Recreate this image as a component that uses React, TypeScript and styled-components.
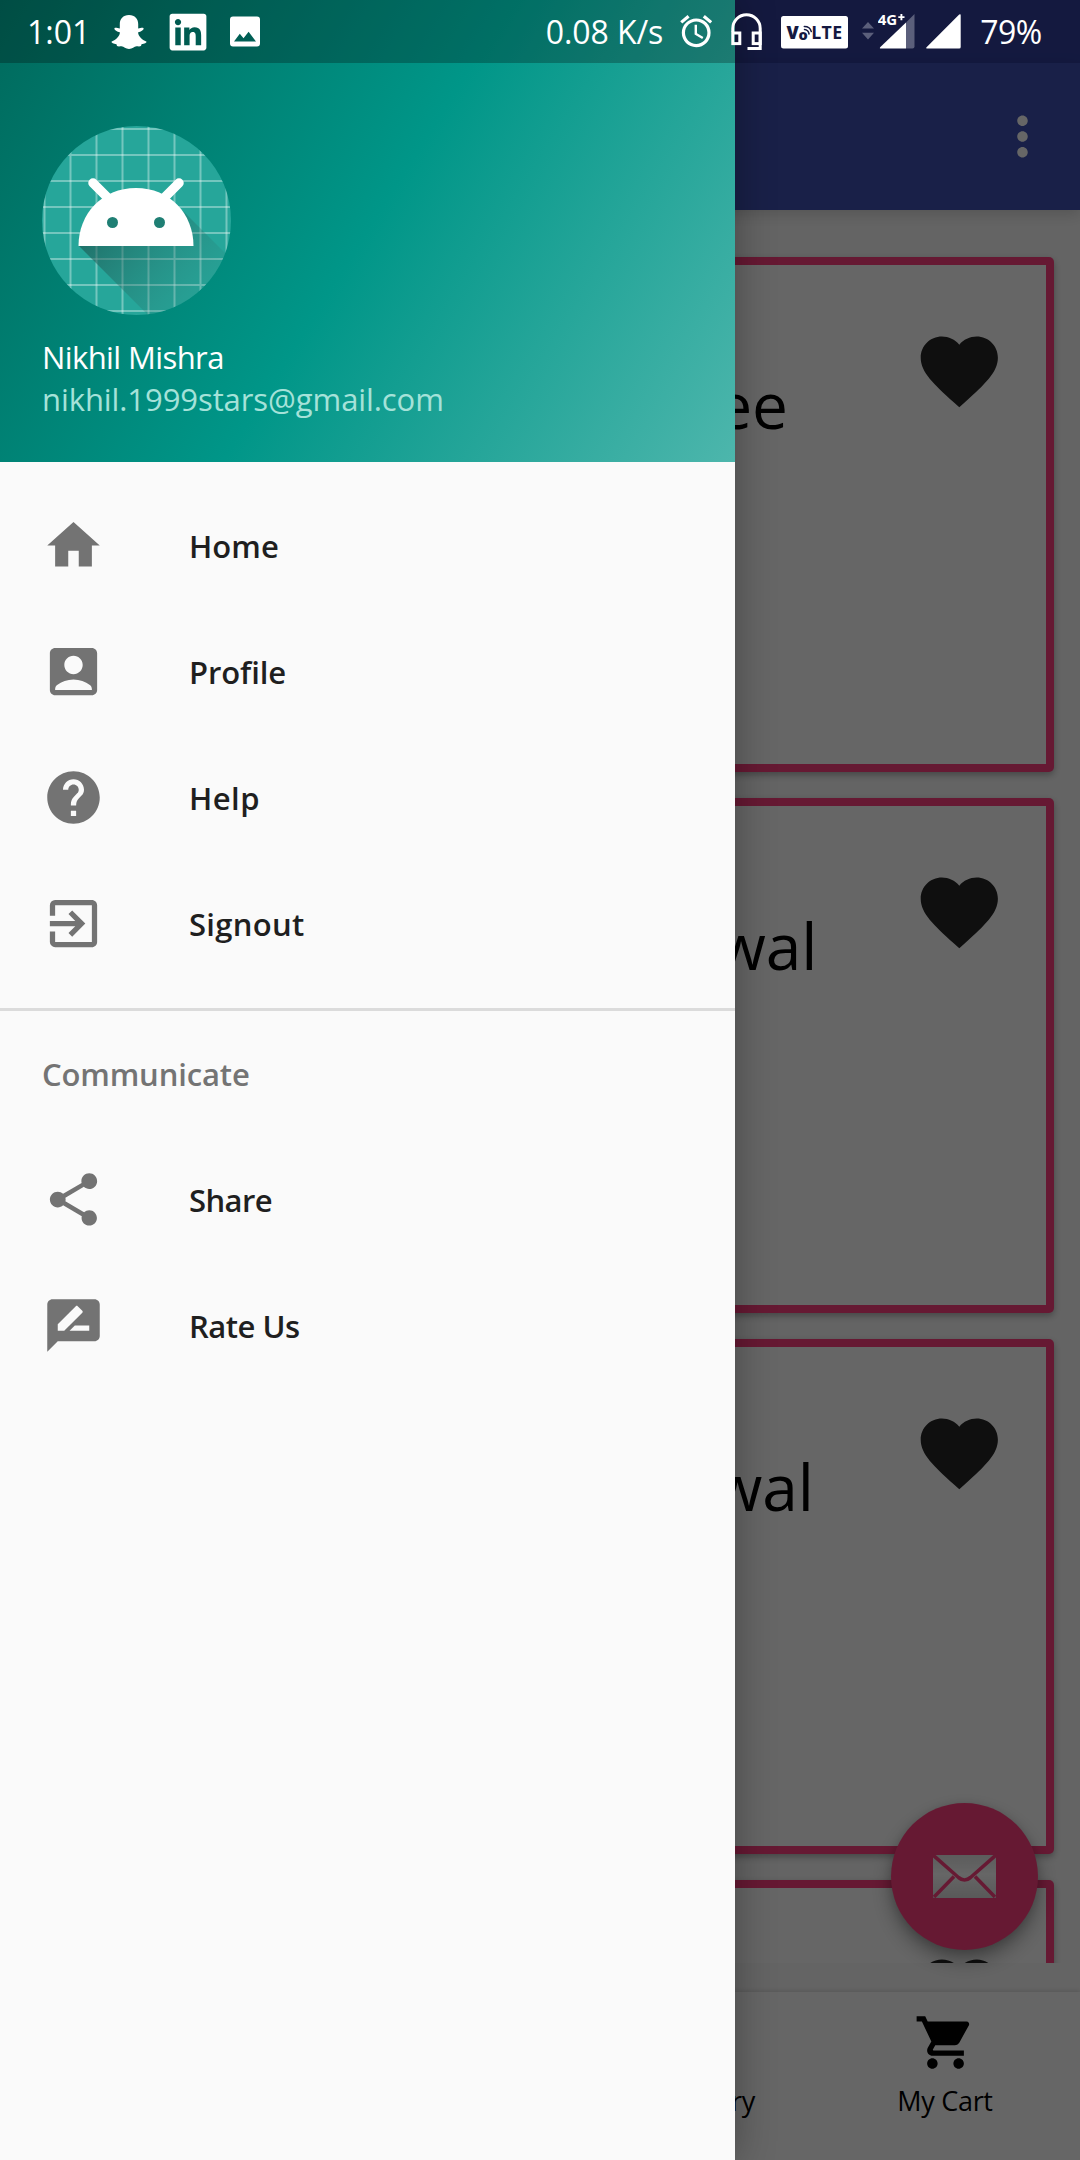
import React from "react";
import styled, { createGlobalStyle } from "styled-components";
import {
  MdAccountBox,
  MdAlarm,
  MdExitToApp,
  MdFavorite,
  MdHelp,
  MdMoreVert,
  MdShare,
  MdShoppingCart,
} from "react-icons/md";
import { FaLinkedin } from "react-icons/fa";

const GlobalStyle = createGlobalStyle`
  * { box-sizing: border-box; }
  body {
    margin: 0;
    background: #646464;
    font-family: "Open Sans", "Noto Sans", sans-serif;
  }
  svg { display: block; flex: none; }
`;

/* Full-screen layers share one grid cell */
const Screen = styled.div`
  display: grid;
  grid-template: 2160px / 1080px;
  width: 1080px;
  height: 2160px;
  overflow: hidden;
`;

const Page = styled.div`
  grid-area: 1 / 1;
  position: relative;
  display: flex;
  flex-direction: column;
  min-height: 0;
  background: #fafafa;
`;

const StatusBackdrop = styled.div`
  flex: none;
  height: 63px;
  background: #32409f;
`;

const AppBar = styled.header`
  flex: none;
  display: flex;
  align-items: center;
  justify-content: flex-end;
  height: 147px;
  padding-right: 26px;
  background: #3f51b5;
  color: #fff;
  box-shadow: 0 4px 14px rgba(0, 0, 0, 0.16);
  z-index: 1;
`;

const CardList = styled.main`
  flex: none;
  display: flex;
  flex-direction: column;
  gap: 26px;
  height: 1753px;
  padding: 47px 26px 0;
  overflow: hidden;
`;

const Card = styled.article`
  flex: none;
  display: flex;
  height: 515px;
  padding: 8px;
  border-radius: 5px;
  background: #ff4081;
  box-shadow: 0 3px 7px rgba(0, 0, 0, 0.3);
`;

const CardBody = styled.div`
  flex: 1;
  display: flex;
  align-items: flex-start;
  justify-content: space-between;
  padding: 59.5px 40px 0 0;
  background: #fff;
  color: #262626;
`;

const CardTitle = styled.h2<{ $width: number }>`
  width: ${(p) => p.$width}px;
  margin: 36.5px 0 0;
  font-size: 64px;
  font-weight: 400;
  line-height: 88px;
  text-align: right;
  color: #000;
`;

const BottomNav = styled.nav`
  flex: none;
  display: grid;
  grid-template-columns: repeat(4, 270px);
  height: 168px;
  margin-top: 29px;
  background: #fff;
  color: #000;
  box-shadow: 0 -1px 5px rgba(0, 0, 0, 0.14);
`;

const NavTab = styled.div<{ $column: number }>`
  grid-column: ${(p) => p.$column};
  display: flex;
  flex-direction: column;
  align-items: center;
  gap: 8px;
  padding-top: 19px;
`;

const NavIconSpace = styled.div`
  height: 63px;
`;

const NavLabel = styled.span<{ $indent?: number }>`
  padding-left: ${(p) => p.$indent ?? 0}px;
  font-size: 27px;
  line-height: 38px;
  letter-spacing: -0.3px;
  white-space: nowrap;
`;

const Fab = styled.button`
  position: absolute;
  right: 42px;
  bottom: 210px;
  display: flex;
  align-items: center;
  justify-content: center;
  width: 147px;
  height: 147px;
  padding: 0;
  border: 0;
  border-radius: 50%;
  background: #ff4081;
  box-shadow: 0 10px 20px rgba(0, 0, 0, 0.34), 0 2px 10px rgba(0, 0, 0, 0.12);
`;

const Scrim = styled.div`
  grid-area: 1 / 1;
  z-index: 2;
  background: rgba(0, 0, 0, 0.6);
`;

const Drawer = styled.aside`
  grid-area: 1 / 1;
  z-index: 3;
  display: flex;
  flex-direction: column;
  width: 735px;
  background: #fafafa;
  box-shadow: 0 0 38px rgba(0, 0, 0, 0.32);
`;

const DrawerHeader = styled.div`
  flex: none;
  display: flex;
  flex-direction: column;
  height: 462px;
  background: linear-gradient(122.15deg, #00695c, #009688 50%, #4db6ac);
`;

const StatusShade = styled.div`
  flex: none;
  height: 63px;
  background: rgba(0, 0, 0, 0.26);
`;

const Account = styled.div`
  display: flex;
  flex-direction: column;
  padding: 63px 42px 0;
  color: #fff;
`;

const AccountName = styled.span`
  margin-top: 21px;
  font-size: 31px;
  line-height: 42px;
  letter-spacing: -0.6px;
`;

const AccountEmail = styled.span`
  font-size: 31px;
  line-height: 42px;
  letter-spacing: -0.08px;
  color: #a5e2d9;
`;

const Menu = styled.ul`
  display: flex;
  flex-direction: column;
  margin: 0;
  padding: 21px 0;
  list-style: none;
`;

const MenuSection = styled(Menu)`
  padding: 0;
  border-top: 3px solid #dbdbdb;
`;

const MenuItem = styled.li`
  display: flex;
  align-items: center;
  gap: 84px;
  height: 126px;
  padding-left: 42px;
  color: #737373;

  svg { margin-bottom: 2px; }
`;

const MenuLabel = styled.span<{ $spacing: number }>`
  font-size: 31px;
  font-weight: 600;
  line-height: 42px;
  letter-spacing: ${(p) => p.$spacing}px;
  color: #1f1f1f;
`;

const MenuHeading = styled.li`
  display: flex;
  align-items: center;
  height: 126px;
  padding-left: 42px;
  font-size: 31px;
  font-weight: 600;
  letter-spacing: -0.15px;
  color: #747474;
`;

const StatusBar = styled.div`
  grid-area: 1 / 1;
  z-index: 4;
  display: flex;
  align-items: center;
  height: 63px;
  color: #fff;
`;

const StatusSlot = styled.div<{ $gap: number; $width: number }>`
  flex: none;
  display: flex;
  align-items: center;
  justify-content: center;
  width: ${(p) => p.$width}px;
  margin-left: ${(p) => p.$gap}px;
`;

const StatusText = styled.span<{ $gap: number; $width: number; $spacing?: number }>`
  flex: none;
  width: ${(p) => p.$width}px;
  margin-left: ${(p) => p.$gap}px;
  font-size: 32px;
  line-height: 62px;
  letter-spacing: ${(p) => p.$spacing ?? 0}px;
  white-space: nowrap;
`;

function SnapchatIcon() {
  return (
    <svg width="36" height="63" viewBox="0 0 36 63" fill="currentColor">
      <path
        transform="translate(0 15)"
        d="M18 0C12 0 8.800 4.200 8.800 9v4.400c-2-.1-4.200-1-5.200-.3-1 1.400 2.200 3.400 5.200 4.200C9.300 20.600 5 25 .8 26.500c-1.200.8.8 2 4.700 2.800.3 2.200 1 2.400 5 2C13 31.600 14.500 34 18 34s5-2.400 7.500-2.700c4 .4 4.700.2 5-2 3.900-.8 5.900-2 4.700-2.800-4.200-1.500-8.500-5.900-8-9.200 3-.8 6.200-2.800 5.200-4.200-1-.7-3.200.2-5.200.3V9C27.200 4.200 24 0 18 0z"
      />
    </svg>
  );
}

function PictureIcon() {
  return (
    <svg width="30" height="63" viewBox="0 0 30 63" fill="currentColor">
      <path
        fillRule="evenodd"
        transform="translate(0 16.600)"
        d="M3 0h24a3 3 0 0 1 3 3v24a3 3 0 0 1-3 3H3a3 3 0 0 1-3-3V3a3 3 0 0 1 3-3zM4 25h22L18.600 15.200l-5.100 6.400-3.700-4.400z"
      />
    </svg>
  );
}

function HeadsetIcon() {
  return (
    <svg width="31" height="63" viewBox="0 0 31 63" fill="none" stroke="currentColor" strokeWidth="3">
      <path d="M1.800 32V28.500a13.700 13.700 0 0 1 27.400 0V48.600H16.500" />
      <rect x="1.800" y="33" width="7" height="10.600" />
      <rect x="22.200" y="33" width="7" height="10.600" />
    </svg>
  );
}

function VolteIcon() {
  return (
    <svg width="67" height="63" viewBox="0 0 67 63">
      <rect y="16" width="67" height="32.600" rx="2.500" fill="#fff" />
      <g fill="#141940" fontFamily="Open Sans, sans-serif" fontWeight="800">
        <text x="5.500" y="39.400" fontSize="17.700">V</text>
        <text x="17.600" y="39.800" fontSize="14.500">o</text>
        <text x="30.200" y="39.400" fontSize="17.700" fontWeight="700" textLength="31">LTE</text>
      </g>
      <g fill="none" stroke="#141940" strokeWidth="1.500" strokeLinecap="round">
        <path d="M23.500 29.500q3.800.2 4.600 4.500" />
        <path d="M23.300 26.600q5.800 0 7 5" />
      </g>
    </svg>
  );
}

function DataArrowsIcon() {
  return (
    <svg width="12" height="63" viewBox="0 0 12 63" fill="#5b5f7b">
      <path d="M6 22l6 6.600H0zM6 39.400l6-6.600H0z" />
    </svg>
  );
}

function MobileSignalIcon() {
  return (
    <svg width="37" height="63" viewBox="0 0 37 63">
      <path d="M28 22.500L36.500 14v32.600a2 2 0 0 1-2 2H28z" fill="#5b5f7b" />
      <path d="M28 22.500v26.100H3q-2 0-.6-1.500z" fill="#fff" />
      <text x="-.3" y="25" fontSize="15" fontWeight="700" fontFamily="Open Sans, sans-serif" fill="#fff">
        4G
      </text>
      <path d="M23.400 14v6.200M20.300 17.100h6.200" stroke="#fff" strokeWidth="1.900" />
    </svg>
  );
}

function SignalIcon() {
  return (
    <svg width="35" height="63" viewBox="0 0 35 63" fill="currentColor">
      <path d="M34.700 15.200v31.900q0 1.500-1.500 1.500H1.500Q-.7 48.600.8 47L33.200 14.600q1.500-1 1.500.6z" />
    </svg>
  );
}

function AvatarImage() {
  const lines = [3, 29, 55, 81, 107, 133, 159, 185];
  return (
    <svg width="189" height="189" viewBox="0 0 189 189">
      <defs>
        <clipPath id="disc">
          <circle cx="94.500" cy="94.500" r="94.500" />
        </clipPath>
        <linearGradient id="cast" gradientUnits="userSpaceOnUse" x1="60" y1="90" x2="160" y2="180">
          <stop offset="0" stopColor="#1b4f4a" stopOpacity=".62" />
          <stop offset="1" stopColor="#2f7f77" stopOpacity=".1" />
        </linearGradient>
      </defs>
      <g clipPath="url(#disc)">
        <rect width="189" height="189" fill="#26a69a" />
        <g stroke="#fff" strokeOpacity=".36" strokeWidth="2">
          {lines.map((n) => (
            <path key={n} d={`M${n - 0.5} 0v189M0 ${n}h189`} />
          ))}
        </g>
        <path d="M37 120L142 86 260 204 160 243z" fill="url(#cast)" />
      </g>
      <path d="M36.500 120C36.500 88 60 62 94 62s57.500 26 57.500 58z" fill="#fff" />
      <path d="M51 57l15 15M137 57l-15 15" stroke="#fff" strokeWidth="9.500" strokeLinecap="round" />
      <circle cx="70.500" cy="96.500" r="5.500" fill="#1f7f74" />
      <circle cx="117.500" cy="96.500" r="5.500" fill="#1f7f74" />
    </svg>
  );
}

function HomeIcon() {
  return (
    <svg width="63" height="63" viewBox="0 0 24 24" fill="currentColor">
      <path d="M10 20v-6h4v6h5v-8h3L12 3 2 12h3v8z" />
    </svg>
  );
}

function ReviewIcon() {
  return (
    <svg width="63" height="63" viewBox="0 0 24 24" fill="currentColor">
      <path d="M20 2H4c-1.100 0-1.990.9-1.990 2L2 22l4-4h14c1.100 0 2-.9 2-2V4c0-1.100-.9-2-2-2zM6 14v-2.470l6.880-6.880c.2-.2.510-.2.710 0l1.770 1.770c.2.200.2.510 0 .71L8.470 14H6zm12 0h-7.500l2-2H18v2z" />
    </svg>
  );
}

function EnvelopeIcon() {
  return (
    <svg width="63" height="43" viewBox="0 0 63 43">
      <defs>
        <linearGradient id="paper" x1="0" y1="0" x2="0" y2="1">
          <stop offset="0" stopColor="#e6e6e6" />
          <stop offset=".45" stopColor="#ffffff" />
          <stop offset="1" stopColor="#dedede" />
        </linearGradient>
      </defs>
      <rect width="63" height="43" rx="1" fill="url(#paper)" />
      <g fill="none" stroke="#ff4081" strokeWidth="3.600">
        <path d="M0 0l25.500 22.500q6 5 12 0L63 0" />
        <path d="M1 42l20-20.500M62 42L42 21.500" />
      </g>
    </svg>
  );
}

const cards = [
  { title: "ee", width: 754 },
  { title: "wal", width: 783.5 },
  { title: "wal", width: 780 },
  { title: "", width: 0 },
];

const mainMenu = [
  { label: "Home", spacing: 0.05, icon: <HomeIcon /> },
  { label: "Profile", spacing: -0.1, icon: <MdAccountBox size={63} /> },
  { label: "Help", spacing: 0.45, icon: <MdHelp size={63} /> },
  { label: "Signout", spacing: 0.3, icon: <MdExitToApp size={63} /> },
];

const communicateMenu = [
  { label: "Share", spacing: -0.6, icon: <MdShare size={63} /> },
  { label: "Rate Us", spacing: -0.5, icon: <ReviewIcon /> },
];

export default function App() {
  return (
    <>
      <GlobalStyle />
      <Screen>
        <Page>
          <StatusBackdrop />
          <AppBar>
            <MdMoreVert size={63} />
          </AppBar>
          <CardList>
            {cards.map((card, i) => (
              <Card key={i}>
                <CardBody>
                  <CardTitle $width={card.width}>{card.title}</CardTitle>
                  <MdFavorite size={92.6} />
                </CardBody>
              </Card>
            ))}
          </CardList>
          <BottomNav>
            <NavTab $column={3}>
              <NavIconSpace />
              <NavLabel $indent={136}>ry</NavLabel>
            </NavTab>
            <NavTab $column={4}>
              <MdShoppingCart size={63} />
              <NavLabel>My Cart</NavLabel>
            </NavTab>
          </BottomNav>
          <Fab aria-label="Email">
            <EnvelopeIcon />
          </Fab>
        </Page>

        <Scrim />

        <Drawer>
          <DrawerHeader>
            <StatusShade />
            <Account>
              <AvatarImage />
              <AccountName>Nikhil Mishra</AccountName>
              <AccountEmail>nikhil.1999stars@gmail.com</AccountEmail>
            </Account>
          </DrawerHeader>
          <Menu>
            {mainMenu.map((item) => (
              <MenuItem key={item.label}>
                {item.icon}
                <MenuLabel $spacing={item.spacing}>{item.label}</MenuLabel>
              </MenuItem>
            ))}
          </Menu>
          <MenuSection>
            <MenuHeading>Communicate</MenuHeading>
            {communicateMenu.map((item) => (
              <MenuItem key={item.label}>
                {item.icon}
                <MenuLabel $spacing={item.spacing}>{item.label}</MenuLabel>
              </MenuItem>
            ))}
          </MenuSection>
        </Drawer>

        <StatusBar>
          <StatusText $gap={27} $width={70}>1:01</StatusText>
          <StatusSlot $gap={14} $width={36}><SnapchatIcon /></StatusSlot>
          <StatusSlot $gap={22} $width={37}><FaLinkedin size={42} /></StatusSlot>
          <StatusSlot $gap={24} $width={30}><PictureIcon /></StatusSlot>
          <StatusText $gap={285.8} $width={119.5} $spacing={-0.1}>0.08 K/s</StatusText>
          <StatusSlot $gap={12} $width={38.4}><MdAlarm size={38.4} /></StatusSlot>
          <StatusSlot $gap={15.3} $width={31}><HeadsetIcon /></StatusSlot>
          <StatusSlot $gap={19} $width={67}><VolteIcon /></StatusSlot>
          <StatusSlot $gap={14.3} $width={12}><DataArrowsIcon /></StatusSlot>
          <StatusSlot $gap={3.7} $width={37}><MobileSignalIcon /></StatusSlot>
          <StatusSlot $gap={10.7} $width={35}><SignalIcon /></StatusSlot>
          <StatusText $gap={19.5} $width={64} $spacing={-0.5}>79%</StatusText>
        </StatusBar>
      </Screen>
    </>
  );
}
